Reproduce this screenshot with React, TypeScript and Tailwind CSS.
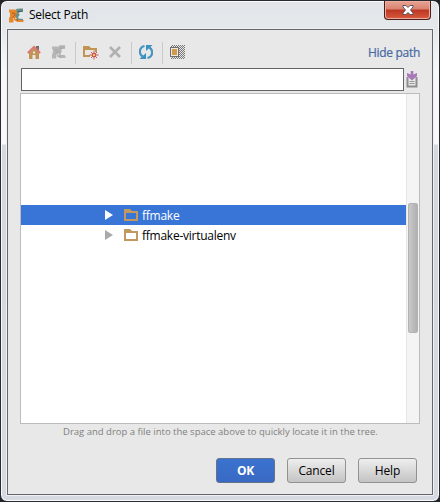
import React from "react";

function AppLogo({ gray = false, size = 15 }: { gray?: boolean; size?: number }) {
  const orange = gray ? "#b6b6b6" : "#e8862c";
  const green = gray ? "#b3b3b3" : "#648f88";
  const brown = gray ? "#a4a4a4" : "#b0581a";
  const dark = gray ? "#a4a4a4" : "#3d665f";
  return (
    <svg width={size} height={size} viewBox="0 0 15 15" className="block shrink-0">
      <path d="M0 1.500h6.500L9 4v3.500L6.500 10H4.500v4.500H0V10l1-1.500V5L0 4z" fill={orange} />
      <path d="M3 5.500c1.500-1 3.500-.5 3 1S4.500 8 3.500 9.500" fill="none" stroke={brown} strokeWidth="1" />
      <path d="M7 1c2-1 5-.5 7-.5v3.500h-3L9.500 5.500 8.500 7.500 7 9l-1-1 2-2.500L7.500 3z" fill={green} />
      <path d="M8.500 3.500c2 .5 3-.5 5-.5" fill="none" stroke={dark} strokeWidth="1" />
      <path d="M10 6l-2 3 1 2.500 5 .5" fill="none" stroke={green} strokeWidth="2" />
      <path d="M5 9.500l2.500 2 2.500.5h4.500V14H8.500L5 12z" fill={orange} />
      <path d="M7 11.500l2 1" fill="none" stroke={brown} strokeWidth="1" />
    </svg>
  );
}

function HomeIcon() {
  return (
    <svg width="14" height="15" viewBox="0 0 14 15" className="block">
      <path d="M9 1h3v5H9z" fill="#6e6e6e" />
      <path d="M2 7.500l5-4.500 5 4.500V14H8.500v-4h-3v4H2z" fill="#c09553" />
      <path d="M.8 8L7 2 13.200 8" fill="none" stroke="#db7774" strokeWidth="2" />
      <path d="M6 6.500h2v2H6z" fill="#e8e8e8" />
    </svg>
  );
}

function NewFolderIcon() {
  return (
    <svg width="16" height="15" viewBox="0 0 16 15" className="block">
      <path fillRule="evenodd" d="M0 1h6l2 2h6v9H0zM2 5v5h10V5z" fill="#c09553" />
      <path d="M7 7h7v7H7z" fill="#e8e8e8" />
      <path d="M11 5.500v9M6.500 10h9M8 7l6 6M14 7l-6 6" stroke="#c75450" strokeWidth="1" />
      <rect x="9" y="8" width="4" height="4" fill="#c75450" />
      <rect x="10" y="9" width="2" height="2" fill="#ffc66b" />
    </svg>
  );
}

function DeleteIcon() {
  return (
    <svg width="12" height="12" viewBox="0 0 12 12" className="block">
      <path d="M1 1l10 10M11 1L1 11" stroke="#b0b0b0" strokeWidth="2.600" />
    </svg>
  );
}

function RefreshIcon() {
  return (
    <svg width="14" height="14" viewBox="0 0 14 14" className="block">
      <path d="M5.500 1C0 2.500-.5 8.500 3.500 11.500" fill="none" stroke="#4594c2" strokeWidth="2.200" />
      <path d="M7 8v6H.5z" fill="#3c91c1" />
      <path d="M8.500 13c5.500-1.500 6-7.500 2-10.500" fill="none" stroke="#4594c2" strokeWidth="2.200" />
      <path d="M7 6V0h6.500z" fill="#3c91c1" />
    </svg>
  );
}

function HiddenFilesIcon() {
  return (
    <svg width="15" height="14" viewBox="0 0 15 14" className="block" shapeRendering="crispEdges">
      <defs>
        <pattern id="dots" width="2" height="2" patternUnits="userSpaceOnUse">
          <path d="M0 0h1v1H0zM1 1h1v1H1z" fill="#777" />
        </pattern>
      </defs>
      <rect x="1" width="14" height="14" fill="url(#dots)" />
      <rect y="2" width="9" height="10" fill="#6e6e6e" />
      <rect x="1" y="3" width="7" height="8" fill="#efe7dc" />
      <rect x="2" y="4" width="5" height="6" fill="#d29a50" />
    </svg>
  );
}

function HistoryIcon() {
  return (
    <svg width="12" height="17" viewBox="0 0 12 17" className="block">
      <path d="M1.500 6v9.500h9V6" fill="none" stroke="#8e8e8e" strokeWidth="2" />
      <path d="M3.500 10.500h5M3.500 12.500h5" stroke="#999" strokeWidth="1" />
      <path d="M4.700 0h2.600v3.500L11 2v3L6 9.500 1 5V2l3.700 1.500z" fill="#a779b9" />
    </svg>
  );
}

function TreeRow({ name, selected = false }: { name: string; selected?: boolean }) {
  return (
    <div className={`flex h-5 items-center pl-[84px] ${selected ? "bg-[#3875d7] text-white" : "text-black"}`}>
      <svg width="8" height="10" viewBox="0 0 8 10">
        <path d="M0 0l8 5-8 5z" fill={selected ? "#fff" : "#aaa"} />
      </svg>
      <svg width="14" height="12" viewBox="0 0 14 12" className="ml-[11px]">
        <path d="M0 0h6l2 2h6v10H0zM2 4v6h10V4z" fill="#c09860" fillRule="evenodd" />
      </svg>
      <span className="ml-1 whitespace-nowrap pt-[2px] text-[12px] leading-[18px] tracking-[-0.25px]">{name}</span>
    </div>
  );
}

const Divider = () => <div className="h-[22px] w-px bg-[#c9c9c9]" />;

export default function App() {
  return (
    <div className="h-[502px] w-[440px] overflow-hidden bg-[#202428] font-['Open_Sans','Noto_Sans',sans-serif]">
      <div className="h-[502px] rounded-[7px] border border-[#272a30] bg-[linear-gradient(to_bottom,#e1e5e9_0px,#e5e8eb_28px,#f7f8f9_70px,#faf8f9_143px,#d6d8e0_144px,#d6d9e1_100%)] px-1.5 shadow-[inset_0_0_0_1px_#fafafa]">
        <header className="flex h-7 items-start">
          <div className="ml-0.5 mt-[7px]"><AppLogo /></div>
          <h1 className="ml-[5px] mt-1 grow text-[12px] leading-5 tracking-[-0.25px] text-black">Select Path</h1>
          <button className="mr-0.5 flex h-[19px] w-[47px] items-center justify-center rounded-b-[4px] border border-t-0 border-[#481d1b] bg-[linear-gradient(#e8a594_0%,#d98371_45%,#bd3521_50%,#d85c40_100%)] shadow-[inset_0_0_0_1px_#ecac9e]">
            <svg width="12" height="10" viewBox="0 0 12 10">
              <path d="M1 .5h3l2 2 2-2h3v1.500L8.500 5 11 8v1.500H8l-2-2-2 2H1V8l2.500-3L1 2z" fill="#fff" stroke="#5d5563" />
            </svg>
          </button>
        </header>

        <main className="flex h-[466px] flex-col border border-[#65676c] bg-[#e8e8e8] shadow-[0_0_0_1px_#eef0f3]">
          <div className="flex h-[38px] items-end justify-between pl-[19px] pr-3">
            <div className="mb-1 flex h-[22px] items-center">
              <div className="-mt-px"><HomeIcon /></div>
              <div className="-mt-0.5 ml-[11px]"><AppLogo gray size={14} /></div>
              <div className="ml-[9px]"><Divider /></div>
              <div className="-mt-px ml-[7px]"><NewFolderIcon /></div>
              <div className="-mt-0.5 ml-[10px]"><DeleteIcon /></div>
              <div className="ml-[10px]"><Divider /></div>
              <div className="-mt-0.5 ml-[7px]"><RefreshIcon /></div>
              <div className="ml-[9px]"><Divider /></div>
              <div className="-mt-0.5 ml-[7px]"><HiddenFilesIcon /></div>
            </div>
            <a className="mb-[5px] text-[12px] leading-5 tracking-[-0.3px] text-[#4668a3] [-webkit-text-stroke:0.2px_#4668a3]">Hide path</a>
          </div>

          <div className="ml-[13px] flex items-center">
            <input className="h-[23px] w-[383px] border border-[#626467] bg-white px-1 text-[12px] outline-none" />
            <div className="ml-[2px]"><HistoryIcon /></div>
          </div>

          <section className="ml-3 mt-0.5 flex h-[331px] w-[400px] border border-[#bcbcbc] bg-white">
            <div className="grow pt-[111px]">
              <TreeRow name="ffmake" selected />
              <TreeRow name="ffmake-virtualenv" />
            </div>
            <div className="w-[13px] border-l border-[#e6e6e6] bg-[#f4f4f4] pl-px pt-[109px]">
              <div className="h-[130px] w-[10px] rounded-[2px] border border-[#b3b3b3] bg-[linear-gradient(to_right,#c9c9c9,#b0b0b0)]" />
            </div>
          </section>

          <p className="mt-px whitespace-nowrap pl-[55px] text-[9.500px] leading-[14px] text-[#808080]">
            Drag and drop a file into the space above to quickly locate it in the tree.
          </p>

          <footer className="mt-[19px] flex justify-end gap-3 pr-[15px] text-[12px] tracking-[-0.15px]">
            <button className="h-[25px] w-[59px] rounded-[3px] border border-[#62738d] bg-[linear-gradient(#3a73cf,#3969c3)] font-bold leading-[23px] text-white">OK</button>
            <button className="h-[25px] w-[59px] rounded-[3px] border border-[#929292] bg-[linear-gradient(#eeeeee,#c4c4c4)] leading-[23px] text-black">Cancel</button>
            <button className="h-[25px] w-[59px] rounded-[3px] border border-[#929292] bg-[linear-gradient(#eeeeee,#c4c4c4)] leading-[23px] text-black">Help</button>
          </footer>
        </main>
      </div>
    </div>
  );
}
